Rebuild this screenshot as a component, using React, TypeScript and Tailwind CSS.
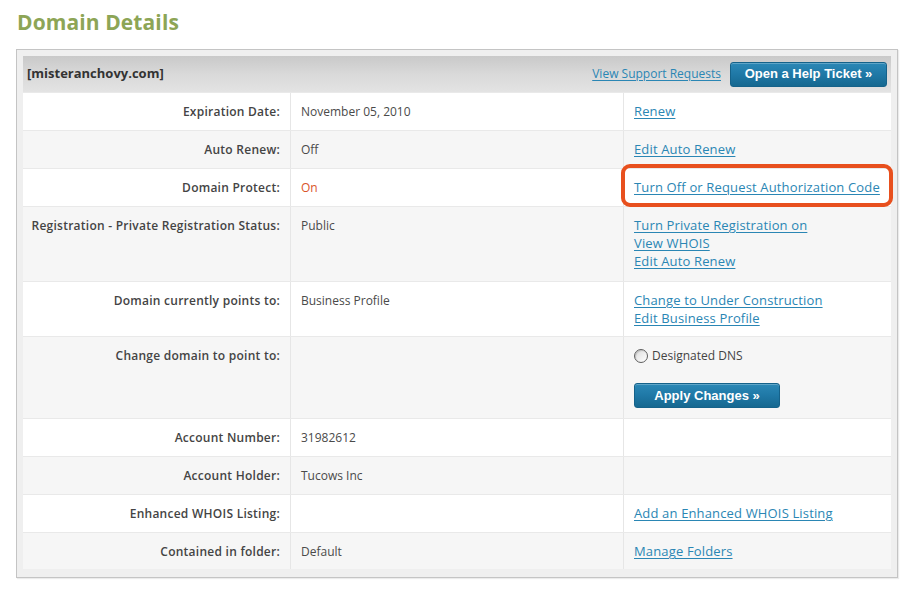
import React from "react";

const font = { fontFamily: '"Open Sans", "Noto Sans", Arial, sans-serif' };

function Link({ children, small }: { children: React.ReactNode; small?: boolean }) {
  return (
    <a
      href="#"
      className={
        "text-[#2a86b4] underline underline-offset-2 decoration-1 leading-[18px] block w-fit " +
        (small ? "text-[12px]" : "text-[13px] tracking-[0.15px]")
      }
    >
      {children}
    </a>
  );
}

function BlueButton({ children, className }: { children: React.ReactNode; className: string }) {
  return (
    <button
      className={
        "rounded-[3px] text-white font-bold text-[13px] bg-gradient-to-b from-[#2b88b6] via-[#1f78a6] to-[#166890] border border-[#15628a] shadow-[inset_0_1px_0_rgba(255,255,255,0.25)] flex items-center justify-center " +
        className
      }
      style={{ fontFamily: 'Arial, "Liberation Sans", sans-serif' }}
    >
      {children}
    </button>
  );
}

type Row = {
  label: string;
  value?: React.ReactNode;
  action?: React.ReactNode;
  h: string;
  bg: string;
};

export default function App() {
  const rows: Row[] = [
    { label: "Expiration Date:", value: "November 05, 2010", action: <Link>Renew</Link>, h: "h-[38px]", bg: "bg-white" },
    { label: "Auto Renew:", value: "Off", action: <Link>Edit Auto Renew</Link>, h: "h-[38px]", bg: "bg-[#f6f6f6]" },
    {
      label: "Domain Protect:",
      value: <span className="text-[#d9542a]">On</span>,
      action: (
        <div className="relative">
          <Link>Turn Off or Request Authorization Code</Link>
          <div className="absolute -left-[13px] -top-[14px] w-[272px] h-[43px] border-[4px] border-[#e8501e] rounded-[9px] pointer-events-none" />
        </div>
      ),
      h: "h-[38px]",
      bg: "bg-white",
    },
    {
      label: "Registration - Private Registration Status:",
      value: "Public",
      action: (
        <div className="flex flex-col">
          <Link>Turn Private Registration on</Link>
          <Link>View WHOIS</Link>
          <Link>Edit Auto Renew</Link>
        </div>
      ),
      h: "h-[75px]",
      bg: "bg-[#f6f6f6]",
    },
    {
      label: "Domain currently points to:",
      value: "Business Profile",
      action: (
        <div className="flex flex-col">
          <Link>Change to Under Construction</Link>
          <Link>Edit Business Profile</Link>
        </div>
      ),
      h: "h-[55px]",
      bg: "bg-white",
    },
    {
      label: "Change domain to point to:",
      value: "",
      action: (
        <div className="flex flex-col pt-[1px]">
          <label className="flex items-center gap-[4px] leading-[18px] text-[#444]">
            <span className="w-[14px] h-[14px] rounded-full border border-[#5f5f5f] bg-gradient-to-br from-[#dcdcdc] to-white inline-block shadow-[inset_1px_1px_1px_rgba(0,0,0,0.15)]" />
            <span>Designated DNS</span>
          </label>
          <BlueButton className="mt-[18px] w-[146px] h-[25px]">Apply Changes »</BlueButton>
        </div>
      ),
      h: "h-[82px]",
      bg: "bg-[#f6f6f6]",
    },
    { label: "Account Number:", value: "31982612", action: null, h: "h-[38px]", bg: "bg-white" },
    { label: "Account Holder:", value: "Tucows Inc", action: null, h: "h-[38px]", bg: "bg-[#f6f6f6]" },
    { label: "Enhanced WHOIS Listing:", value: "", action: <Link>Add an Enhanced WHOIS Listing</Link>, h: "h-[38px]", bg: "bg-white" },
    { label: "Contained in folder:", value: "Default", action: <Link>Manage Folders</Link>, h: "h-[37px]", bg: "bg-[#f6f6f6]" },
  ];

  return (
    <div className="w-[923px] h-[601px] bg-white overflow-hidden text-[12px]" style={font}>
      <h1 className="text-[#8da556] font-bold text-[21px] leading-[24px] pl-[17px] pt-[10px] tracking-[0.1px]">
        Domain Details
      </h1>
      <div className="ml-[16px] mt-[15px] w-[882px] border border-[#c4c4c4] bg-[#efefef] pt-[6px] px-[6px] pb-[8px] shadow-[1px_1px_1px_rgba(0,0,0,0.08)]">
        <div className="h-[36px] flex items-center justify-between bg-gradient-to-b from-[#c9c9c9] via-[#d9d9d9] to-[#e3e3e3] pl-[4px] pr-[4px]">
          <span className="font-bold text-[13px] text-[#333]">[misteranchovy.com]</span>
          <div className="flex items-center gap-[9px]">
            <Link small>View Support Requests</Link>
            <BlueButton className="w-[157px] h-[25px]">Open a Help Ticket »</BlueButton>
          </div>
        </div>
        <div className="flex flex-col">
          {rows.map((r, i) => (
            <div key={i} className={"grid grid-cols-[268px_333px_267px] border-t border-[#e9e9e9] " + r.h + " " + r.bg}>
              <div className="pr-[10px] pt-[10px] text-right font-semibold text-[#444] leading-[18px] tracking-[0.25px] border-r border-[#e6e6e6]">
                {r.label}
              </div>
              <div className="pl-[10px] pt-[10px] text-[#4a4a4a] leading-[18px] border-r border-[#e6e6e6]">{r.value}</div>
              <div className="pl-[10px] pt-[9px] leading-[18px]">{r.action}</div>
            </div>
          ))}
        </div>
      </div>
    </div>
  );
}
